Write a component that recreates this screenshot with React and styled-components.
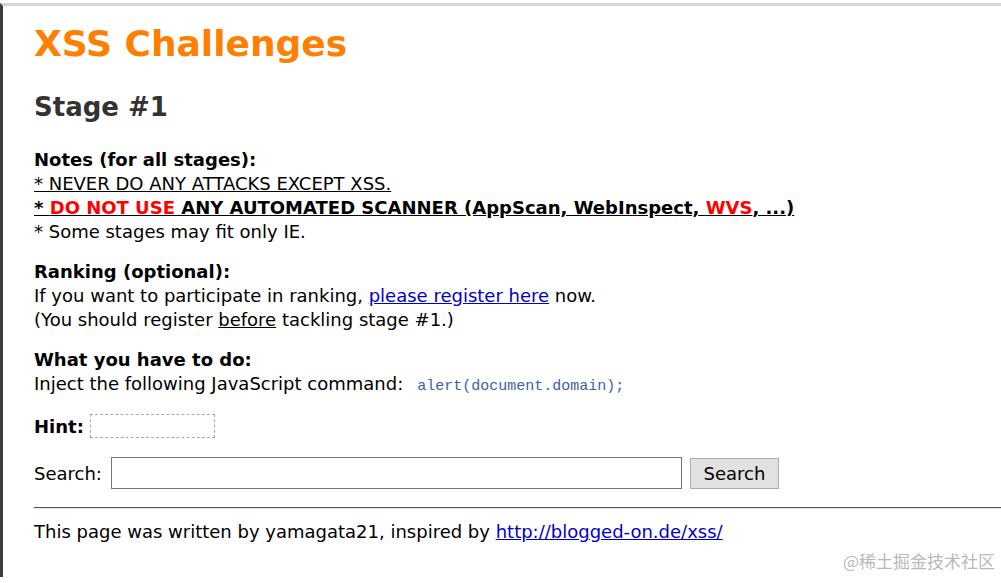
import React from 'react';
import styled, { createGlobalStyle } from 'styled-components';

const GlobalStyle = createGlobalStyle`
  html, body {
    margin: 0;
    padding: 0;
    background: #fff;
  }
  body {
    padding-top: 3px;
    font-family: "DejaVu Sans", Verdana, sans-serif;
    font-size: 18px;
    color: #000;
  }
`;

const Frame = styled.div`
  border-top: 3px solid #d6d6d6;
  border-left: 3px solid #3c3c3c;
  min-height: 574px;
  box-sizing: border-box;
  padding: 17px 0 0 31px;
  position: relative;
`;

const Title = styled.h1`
  margin: 0;
  font-size: 36px;
  line-height: 42px;
  font-weight: bold;
  color: #ff7f00;
`;

const Stage = styled.h2`
  margin: 26px 0 0;
  font-size: 26px;
  line-height: 32px;
  font-weight: bold;
  color: #333;
`;

const Section = styled.div`
  margin-top: ${(p) => p.$gap || 16}px;
  line-height: 24px;
`;

const Label = styled.div`
  font-weight: bold;
`;

const Line = styled.div`
  ${(p) => p.$underline && 'text-decoration: underline;'}
  ${(p) => p.$bold && 'font-weight: bold;'}
`;

const Red = styled.span`
  color: #ff0000;
`;

const Link = styled.a`
  color: #0000cc;
  text-decoration: underline;
`;

const U = styled.span`
  text-decoration: underline;
`;

const Code = styled.code`
  margin-left: 14px;
  font-family: "Liberation Mono", "Noto Sans CJK SC", monospace;
  font-size: 15px;
  color: #3b5fad;
`;

const HintRow = styled.div`
  display: flex;
  align-items: center;
  gap: 6px;
  margin-top: 15px;
  font-weight: bold;
`;

const HintBox = styled.div`
  width: 123px;
  height: 22px;
  border: 1px dashed #a8a8a8;
`;

const SearchRow = styled.form`
  display: flex;
  align-items: center;
  margin-top: 19px;
`;

const SearchLabel = styled.label`
  margin-right: 9px;
`;

const Input = styled.input`
  width: 571px;
  height: 32px;
  box-sizing: border-box;
  border: 1px solid #767676;
  margin: 0 8px 0 0;
  padding: 0 4px;
  font-size: 16px;
`;

const Button = styled.button`
  height: 31px;
  width: 89px;
  box-sizing: border-box;
  border: 1px solid #adadad;
  background: #e1e1e1;
  font-family: "DejaVu Sans", sans-serif;
  font-size: 18px;
  color: #000;
  padding: 0;
`;

const Rule = styled.hr`
  margin: 18px 0 0;
  border: 0;
  border-top: 1px solid #555;
  border-bottom: 1px solid #e8e8e8;
`;

const Footer = styled.p`
  margin: 11px 0 0;
  line-height: 24px;
`;

const Watermark = styled.div`
  position: absolute;
  right: 6px;
  bottom: 4px;
  font-family: "Noto Sans CJK SC", sans-serif;
  font-size: 17px;
  color: #b9b9b9;
`;

export default function App() {
  return (
    <>
      <GlobalStyle />
      <Frame>
        <Title>XSS Challenges</Title>
        <Stage>Stage #1</Stage>

        <Section $gap={25}>
          <Label>Notes (for all stages):</Label>
          <Line $underline>* NEVER DO ANY ATTACKS EXCEPT XSS.</Line>
          <Line $underline $bold>
            * <Red>DO NOT USE</Red> ANY AUTOMATED SCANNER (AppScan, WebInspect, <Red>WVS</Red>, ...)
          </Line>
          <Line>* Some stages may fit only IE.</Line>
        </Section>

        <Section>
          <Label>Ranking (optional):</Label>
          <Line>
            If you want to participate in ranking, <Link href="#">please register here</Link> now.
          </Line>
          <Line>
            (You should register <U>before</U> tackling stage #1.)
          </Line>
        </Section>

        <Section>
          <Label>What you have to do:</Label>
          <Line>
            Inject the following JavaScript command:<Code>alert(document.domain);</Code>
          </Line>
        </Section>

        <HintRow>
          Hint: <HintBox />
        </HintRow>

        <SearchRow onSubmit={(e) => e.preventDefault()}>
          <SearchLabel>Search:</SearchLabel>
          <Input type="text" />
          <Button type="submit">Search</Button>
        </SearchRow>

        <Rule />
        <Footer>
          This page was written by yamagata21, inspired by{' '}
          <Link href="#">http://blogged-on.de/xss/</Link>
        </Footer>
        <Watermark>@稀土掘金技术社区</Watermark>
      </Frame>
    </>
  );
}
